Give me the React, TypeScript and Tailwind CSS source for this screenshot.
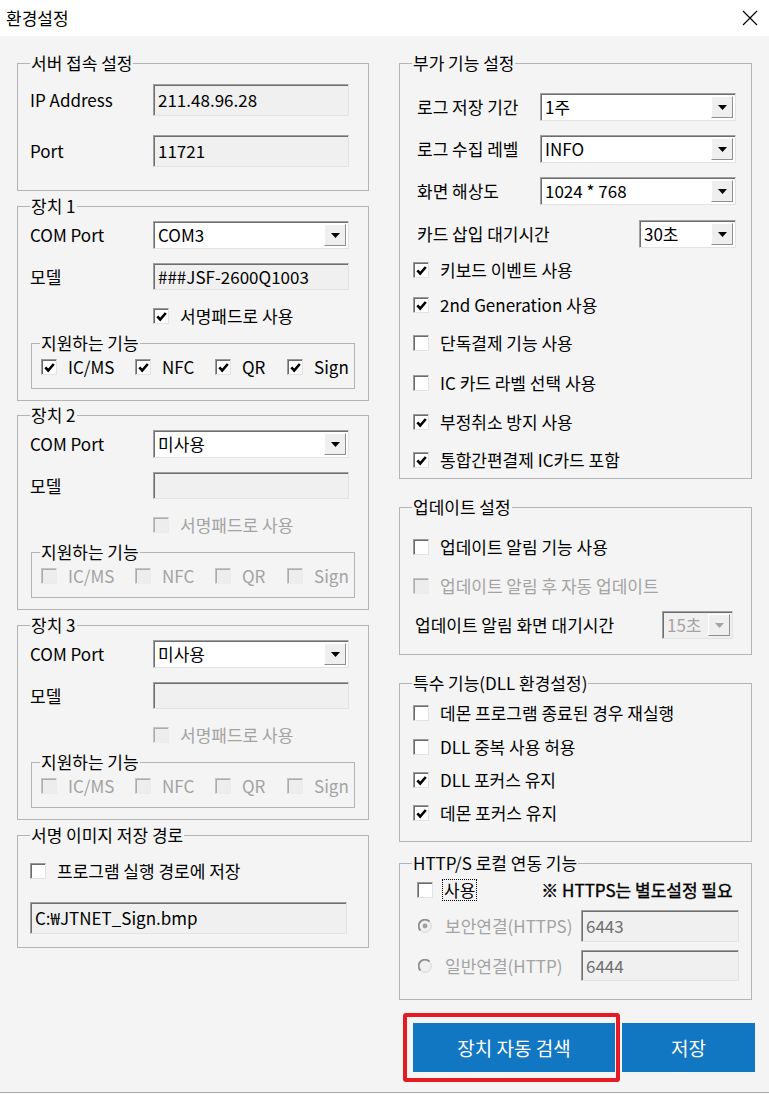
import clsx from 'clsx';
import type { ReactNode } from 'react';

const sunken =
  'border border-[#a0a0a0] border-r-[#e3e3e3] border-b-[#e3e3e3] shadow-[inset_1px_1px_0_#6e6e6e]';

function CheckBox({ checked = false, disabled = false }: { checked?: boolean; disabled?: boolean }) {
  return (
    <span
      className={clsx(
        'flex h-4 w-4 shrink-0 items-center justify-center border',
        disabled
          ? 'border-[#c4c4c4] border-r-[#ebebeb] border-b-[#ebebeb] bg-[#ededed] shadow-[inset_1px_1px_0_#acacac]'
          : 'border-[#9a9a9a] border-r-[#e3e3e3] border-b-[#e3e3e3] bg-white shadow-[inset_1px_1px_0_#6b6b6b]'
      )}
    >
      {checked && (
        <svg width="11" height="11" viewBox="0 0 11 11">
          <path d="M1.3 5.4 L4.2 8.5 L9.8 2" stroke="#000" strokeWidth="2.6" fill="none" />
        </svg>
      )}
    </span>
  );
}

function CheckItem({
  label,
  checked,
  disabled,
  className,
}: {
  label: string;
  checked?: boolean;
  disabled?: boolean;
  className?: string;
}) {
  return (
    <div className={clsx('flex h-5 items-center gap-[11px]', className)}>
      <CheckBox checked={checked} disabled={disabled} />
      <span className={clsx('whitespace-nowrap', disabled && 'text-[#a3a3a3]')}>{label}</span>
    </div>
  );
}

function Radio({ checked = false }: { checked?: boolean }) {
  return (
    <svg width="14" height="14" viewBox="0 0 14 14" className="shrink-0">
      <circle cx="7" cy="7" r="6.3" fill="#f0f0f0" stroke="#d6d6d6" />
      <path d="M2.5 11.5 A6.3 6.3 0 0 1 11.5 2.5" stroke="#8f8f8f" strokeWidth="1.8" fill="none" />
      {checked && <circle cx="7" cy="7" r="2.4" fill="#a0a0a0" />}
    </svg>
  );
}

function Field({ value = '', className }: { value?: string; className?: string }) {
  return (
    <div className={clsx('flex items-center bg-[#f0f0f0] pl-[4px]', sunken, className)}>{value}</div>
  );
}

function Select({ value, width, disabled }: { value: string; width: string; disabled?: boolean }) {
  return (
    <div
      className={clsx(
        'flex h-[28px] items-center justify-between pl-[4px] pr-[2px]',
        sunken,
        disabled ? 'bg-[#f0f0f0] text-[#a3a3a3]' : 'bg-white',
        width
      )}
    >
      <span className="whitespace-nowrap">{value}</span>
      <span className="flex h-[22px] w-[22px] items-center justify-center border border-white border-r-[#8f8f8f] border-b-[#8f8f8f] bg-[#efefef]">
        <svg width="9" height="5" viewBox="0 0 9 5">
          <path d="M0 0h9L4.5 5z" fill={disabled ? '#a3a3a3' : '#000'} />
        </svg>
      </span>
    </div>
  );
}

function Group({
  title,
  className,
  legendClass = 'ml-[12px]',
  children,
}: {
  title: string;
  className?: string;
  legendClass?: string;
  children?: ReactNode;
}) {
  return (
    <div className={clsx('border border-[#b4b4b4]', className)}>
      <div className={clsx('-mt-[11px] w-fit bg-[#f4f4f4] px-[1px] leading-[20px]', legendClass)}>{title}</div>
      {children}
    </div>
  );
}

function Device({
  title,
  port,
  model,
  enabled,
  className,
}: {
  title: string;
  port: string;
  model: string;
  enabled: boolean;
  className?: string;
}) {
  const features = [
    { label: 'IC/MS', w: 'w-[94px]' },
    { label: 'NFC', w: 'w-[80px]' },
    { label: 'QR', w: 'w-[72px]' },
    { label: 'Sign', w: 'w-[60px]' },
  ];
  return (
    <Group title={title} className={clsx('h-[195px]', className)}>
      <div className="mt-[5px] flex items-center pl-[12px]">
        <span className="w-[123px]">COM Port</span>
        <Select value={port} width="w-[196px]" />
      </div>
      <div className="mt-[14px] flex items-center pl-[12px]">
        <span className="w-[123px]">모델</span>
        <Field value={model} className="h-[27px] w-[196px]" />
      </div>
      <CheckItem className="mt-[16px] pl-[135px]" label="서명패드로 사용" checked={enabled} disabled={!enabled} />
      <Group title="지원하는 기능" legendClass="ml-[8px]" className="mx-[13px] mt-[17px] h-[46px]">
        <div className="mt-[4px] flex pl-[9px]">
          {features.map((f) => (
            <CheckItem
              key={f.label}
              className={clsx(f.w, 'gap-[9px]')}
              label={f.label}
              checked={enabled}
              disabled={!enabled}
            />
          ))}
        </div>
      </Group>
    </Group>
  );
}

export default function App() {
  return (
    <div className="h-[1093px] w-[769px] border-b border-[#a9a9a9] bg-[#f4f4f4] font-['Noto_Sans_CJK_KR','Liberation_Sans',sans-serif] text-[17px] leading-[20px] text-black">
      {/* title bar */}
      <div className="flex h-[36px] items-center justify-between bg-white pl-[6px] pr-[11px]">
        <span className="text-[17px]">환경설정</span>
        <svg width="16" height="16" viewBox="0 0 16 16">
          <path d="M1 1 L15 15 M15 1 L1 15" stroke="#000" strokeWidth="1.2" />
        </svg>
      </div>

      <div className="flex gap-[30px] px-[17px]">
        {/* left column */}
        <div className="flex w-[352px] shrink-0 flex-col">
          <Group title="서버 접속 설정" className="mt-[27px] h-[128px]">
            <div className="mt-[11px] flex items-center pl-[12px]">
              <span className="w-[123px]">IP Address</span>
              <Field value="211.48.96.28" className="h-[32px] w-[196px]" />
            </div>
            <div className="mt-[19px] flex items-center pl-[12px]">
              <span className="w-[123px]">Port</span>
              <Field value="11721" className="h-[32px] w-[196px]" />
            </div>
          </Group>

          <Device title="장치 1" port="COM3" model="###JSF-2600Q1003" enabled className="mt-[15px]" />
          <Device title="장치 2" port="미사용" model="" enabled={false} className="mt-[14px]" />
          <Device title="장치 3" port="미사용" model="" enabled={false} className="mt-[15px]" />

          <Group title="서명 이미지 저장 경로" className="mt-[15px] h-[113px]">
            <CheckItem className="mt-[16px] pl-[12px]" label="프로그램 실행 경로에 저장" />
            <Field value="C:₩JTNET_Sign.bmp" className="ml-[12px] mt-[21px] h-[32px] w-[317px]" />
          </Group>
        </div>

        {/* right column */}
        <div className="flex w-[353px] shrink-0 flex-col">
          <Group title="부가 기능 설정" className="mt-[27px] h-[416px]">
            <div className="mt-[20px] flex items-center pl-[17px]">
              <span className="w-[123px]">로그 저장 기간</span>
              <Select value="1주" width="w-[196px]" />
            </div>
            <div className="mt-[14px] flex items-center pl-[17px]">
              <span className="w-[123px]">로그 수집 레벨</span>
              <Select value="INFO" width="w-[196px]" />
            </div>
            <div className="mt-[14px] flex items-center pl-[17px]">
              <span className="w-[123px]">화면 해상도</span>
              <Select value="1024 * 768" width="w-[196px]" />
            </div>
            <div className="mt-[15px] flex items-center pl-[17px]">
              <span className="w-[222px]">카드 삽입 대기시간</span>
              <Select value="30초" width="w-[97px]" />
            </div>
            <CheckItem className="mt-[12px] pl-[13px]" label="키보드 이벤트 사용" checked />
            <CheckItem className="mt-[15px] pl-[13px]" label="2nd Generation 사용" checked />
            <CheckItem className="mt-[18px] pl-[13px]" label="단독결제 기능 사용" />
            <CheckItem className="mt-[20px] pl-[13px]" label="IC 카드 라벨 선택 사용" />
            <CheckItem className="mt-[19px] pl-[13px]" label="부정취소 방지 사용" checked />
            <CheckItem className="mt-[18px] pl-[13px]" label="통합간편결제 IC카드 포함" checked />
          </Group>

          <Group title="업데이트 설정" className="mt-[28px] h-[148px]">
            <CheckItem className="mt-[20px] pl-[13px]" label="업데이트 알림 기능 사용" />
            <CheckItem className="mt-[19px] pl-[13px]" label="업데이트 알림 후 자동 업데이트" disabled />
            <div className="mt-[15px] flex items-center pl-[15px]">
              <span className="w-[247px]">업데이트 알림 화면 대기시간</span>
              <Select value="15초" width="w-[71px]" disabled />
            </div>
          </Group>

          <Group title="특수 기능(DLL 환경설정)" className="mt-[28px] h-[159px]">
            <CheckItem className="mt-[10px] pl-[13px]" label="데몬 프로그램 종료된 경우 재실행" />
            <CheckItem className="mt-[14px] pl-[13px]" label="DLL 중복 사용 허용" />
            <CheckItem className="mt-[13px] pl-[13px]" label="DLL 포커스 유지" checked />
            <CheckItem className="mt-[13px] pl-[13px]" label="데몬 포커스 유지" checked />
          </Group>

          <Group title="HTTP/S 로컬 연동 기능" className="mt-[21px] h-[137px]">
            <div className="mt-[6px] flex h-[22px] items-center pl-[17px]">
              <CheckBox />
              <span className="ml-[9px] border border-dotted border-black px-[1px] leading-[20px]">사용</span>
              <span className="ml-[64px] whitespace-nowrap [-webkit-text-stroke:0.4px_black]">
                ※ HTTPS는 별도설정 필요
              </span>
            </div>
            <div className="mt-[9px] flex items-center pl-[18px]">
              <Radio checked />
              <span className="ml-[13px] w-[136px] whitespace-nowrap text-[#a3a3a3]">보안연결(HTTPS)</span>
              <Field value="6443" className="h-[32px] w-[158px] text-[#6e6e6e]" />
            </div>
            <div className="mt-[8px] flex items-center pl-[18px]">
              <Radio />
              <span className="ml-[13px] w-[136px] whitespace-nowrap text-[#a3a3a3]">일반연결(HTTP)</span>
              <Field value="6444" className="h-[31px] w-[158px] text-[#6e6e6e]" />
            </div>
          </Group>

          <div className="mt-[23px] flex pl-[14px]">
            <div className="relative">
              <button className="flex h-[49px] w-[202px] items-center justify-center bg-[#1177c2] text-[19px] text-white">
                장치 자동 검색
              </button>
              <div className="pointer-events-none absolute -bottom-[10px] -left-[10px] -right-[5px] -top-[10px] rounded-[3px] border-4 border-[#e51b23]" />
            </div>
            <button className="ml-[7px] flex h-[49px] w-[133px] shrink-0 items-center justify-center bg-[#1177c2] text-[19px] text-white">
              저장
            </button>
          </div>
        </div>
      </div>
    </div>
  );
}
